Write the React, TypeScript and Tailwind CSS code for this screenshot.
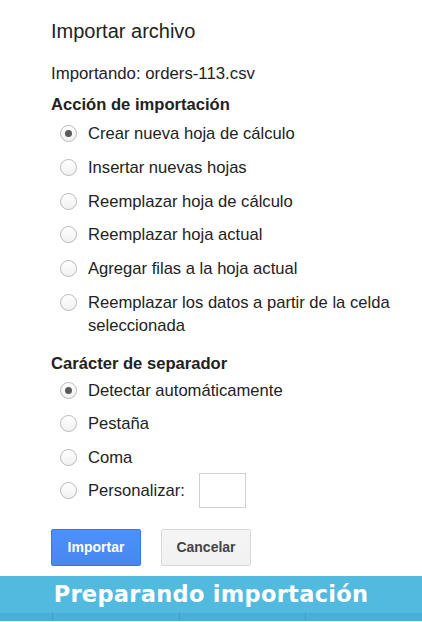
import React from "react";

const ACTIONS = [
  "Crear nueva hoja de cálculo",
  "Insertar nuevas hojas",
  "Reemplazar hoja de cálculo",
  "Reemplazar hoja actual",
  "Agregar filas a la hoja actual",
  "Reemplazar los datos a partir de la celda seleccionada",
];

const SEPARATORS = ["Detectar automáticamente", "Pestaña", "Coma"];

function Radio({ checked }: { checked?: boolean }) {
  return (
    <span className="mt-[3px] flex h-[17px] w-[17px] shrink-0 items-center justify-center rounded-full border border-[#b9b9b9] bg-gradient-to-b from-white to-[#f1f1f1]">
      {checked && <span className="h-[7px] w-[7px] rounded-full bg-[#5a5a5a]" />}
    </span>
  );
}

function Option({ label, checked }: { label: string; checked?: boolean }) {
  return (
    <label className="flex items-start gap-[11px] pl-[9px]">
      <Radio checked={checked} />
      <span className="text-[16.6px] leading-[23px] text-[#222]">{label}</span>
    </label>
  );
}

export default function App() {
  return (
    <div className="h-[622px] w-[422px] overflow-hidden bg-white font-['Liberation_Sans',Arial,sans-serif]">
      <div className="pl-[51px] pr-[30px] pt-[19px]">
        <h1 className="text-[20px] leading-[24px] text-[#222]">Importar archivo</h1>
        <p className="mt-[21px] text-[16.8px] leading-[20px] text-[#222]">Importando: orders-113.csv</p>

        <h2 className="mt-[11px] text-[16.6px] font-bold leading-[20px] text-[#222]">Acción de importación</h2>
        <div className="mt-[7px] flex flex-col gap-[10.8px]">
          {ACTIONS.map((a, i) => (
            <Option key={a} label={a} checked={i === 0} />
          ))}
        </div>

        <h2 className="mt-[17px] text-[16.6px] font-bold leading-[20px] text-[#222]">Carácter de separador</h2>
        <div className="mt-[5px] flex flex-col gap-[10.5px]">
          {SEPARATORS.map((s, i) => (
            <Option key={s} label={s} checked={i === 0} />
          ))}
          <div className="flex items-center gap-[14px]">
            <Option label="Personalizar:" />
            <input className="-my-[6px] h-[35px] w-[47px] border border-[#d0d0d0] bg-white outline-none" />
          </div>
        </div>

        <div className="mt-[27px] flex gap-[20px]">
          <button className="h-[37px] w-[90px] rounded-[2px] border border-[#3079ed] bg-gradient-to-b from-[#4d90fe] to-[#4787ed] text-[14px] font-bold text-white">
            Importar
          </button>
          <button className="h-[37px] w-[90px] rounded-[2px] border border-[#d9d9d9] bg-gradient-to-b from-[#f5f5f5] to-[#f1f1f1] text-[14px] font-bold text-[#444]">
            Cancelar
          </button>
        </div>
      </div>

      <div className="mt-[10px] flex h-[37px] items-center justify-center bg-[#53badf]">
        <span className="font-['DejaVu_Sans',sans-serif] text-[22.5px] font-bold tracking-[0.3px] text-white">
          Preparando importación
        </span>
      </div>
      <div className="grid h-[8px] grid-cols-[53px_127px_126px_1fr] bg-[#48b0d8]">
        <div className="border-r border-[#3b9ec7]" />
        <div className="border-r border-[#3b9ec7]" />
        <div className="border-r border-[#3b9ec7]" />
        <div />
      </div>
    </div>
  );
}
